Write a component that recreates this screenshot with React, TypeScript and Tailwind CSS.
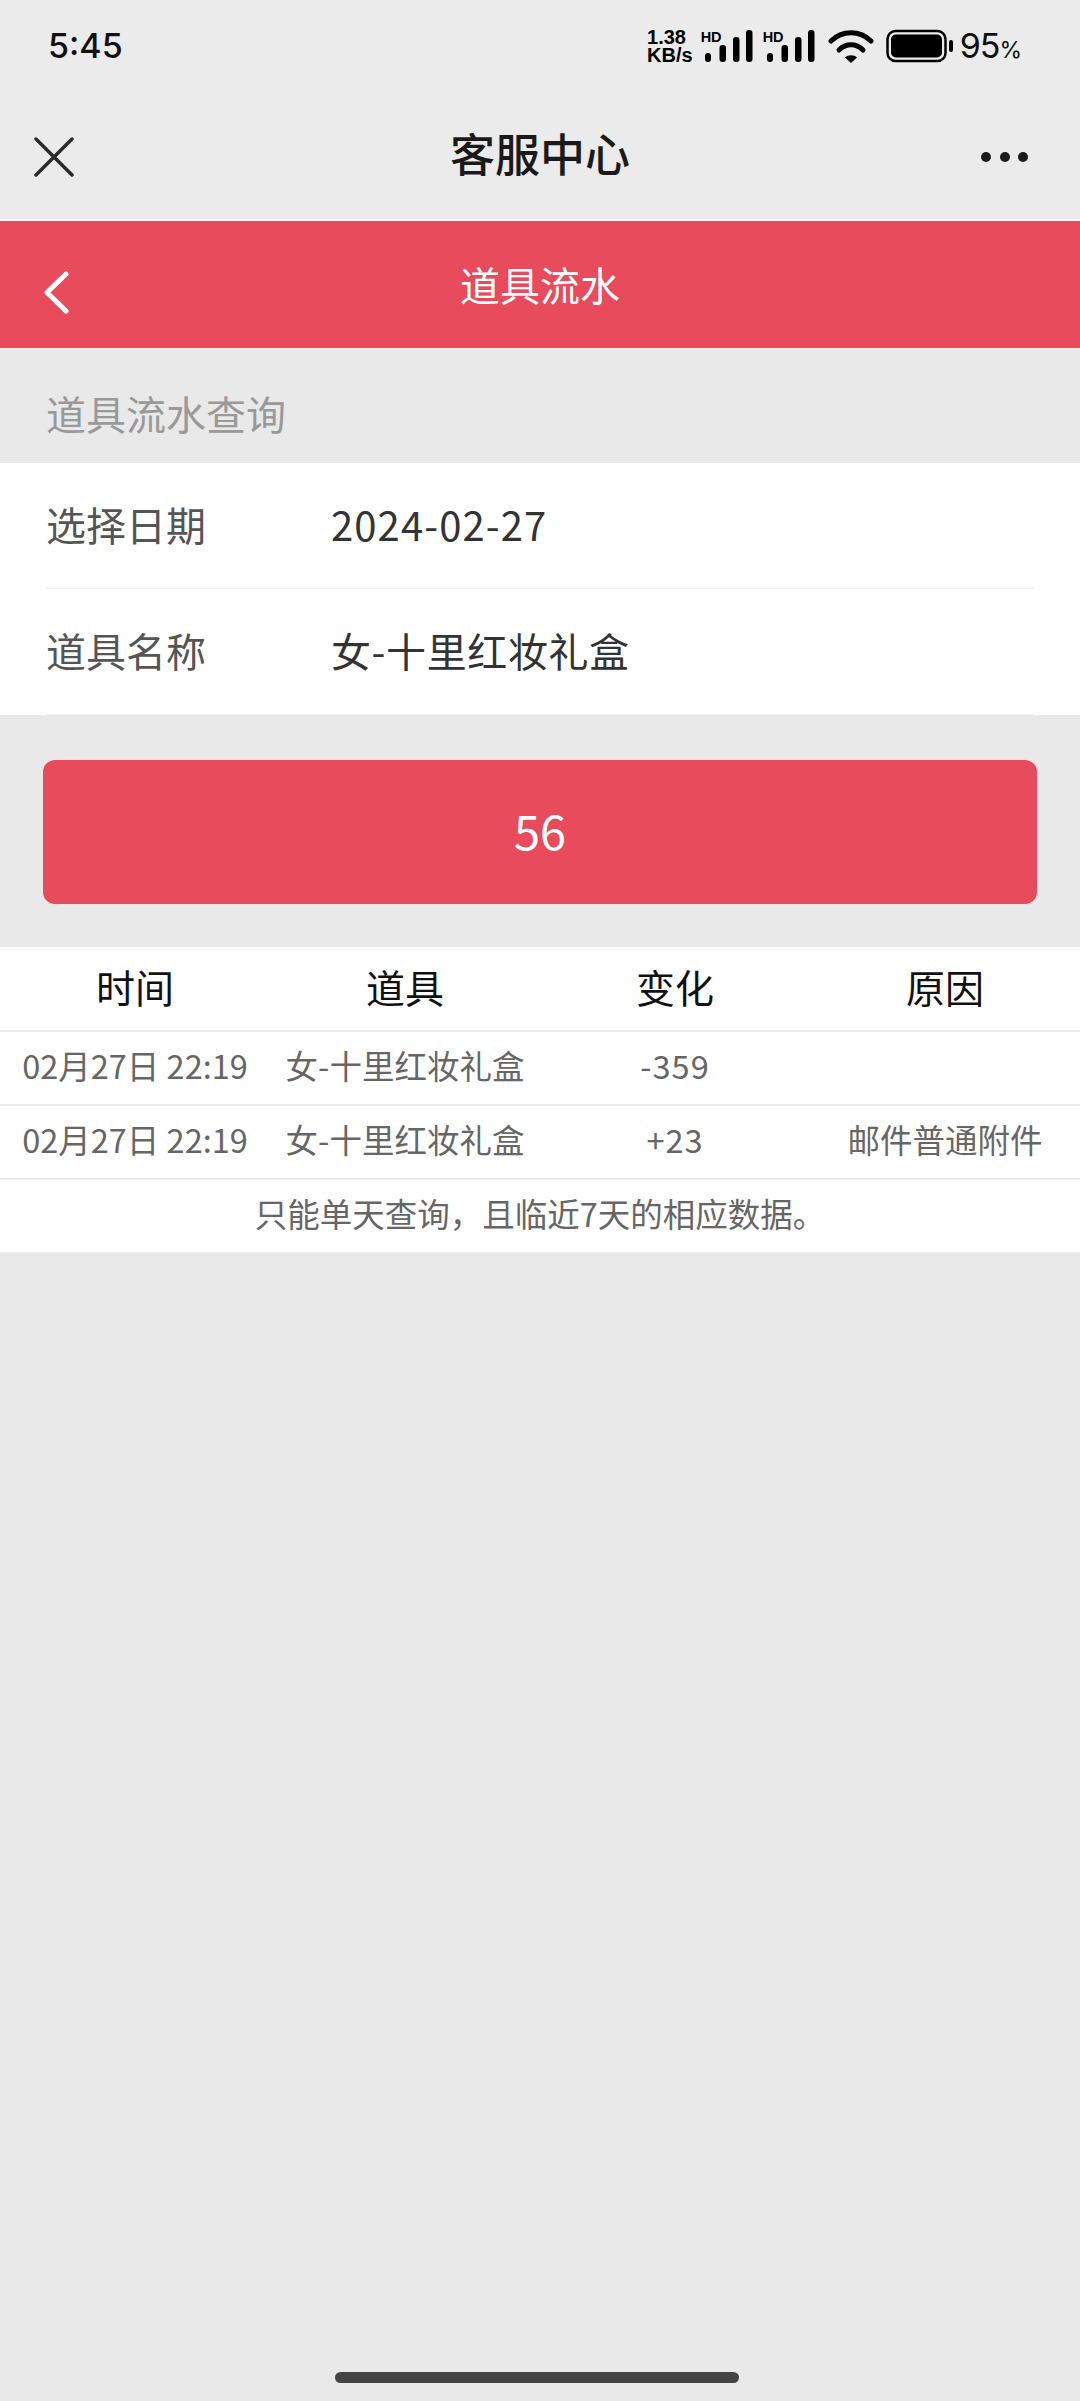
const cjk = "font-['Noto_Sans_CJK_SC','Noto_Sans',sans-serif]";

function Signal() {
  return (
    <div className="relative h-[32px] w-[52px]">
      <span className="absolute left-0 top-[1px] font-['Liberation_Sans',sans-serif] text-[14.5px] font-bold leading-[13px] text-black">HD</span>
      <svg width="52" height="32" viewBox="0 0 52 32" className="absolute left-0 top-0">
        <g fill="#000">
          <rect x="4" y="23" width="6" height="9" rx="3" />
          <rect x="18.5" y="15" width="6.5" height="17" rx="3" />
          <rect x="32" y="7" width="6.5" height="25" rx="3" />
          <rect x="45" y="0" width="6.5" height="32" rx="3" />
        </g>
      </svg>
    </div>
  );
}

function Row({ label, value, tracking }: { label: string; value: string; tracking: string }) {
  return (
    <div className="mx-[46px] flex h-[126px] items-center border-b border-[#efefef] pb-[3px]">
      <span className="w-[285px] text-[40px] leading-none text-[#555555]">{label}</span>
      <span className={`text-[40px] leading-none text-[#333333] ${tracking}`}>{value}</span>
    </div>
  );
}

function TableRow({ cells }: { cells: string[] }) {
  return (
    <div className="grid h-[74px] grid-cols-4 items-center border-t-2 border-[#ececec] pb-[6px] text-center text-[32.5px] leading-none text-[#666666]">
      {cells.map((c, i) => (
        <span key={i} className={`whitespace-nowrap ${i === 2 ? "tracking-[1px]" : ""}`}>{c}</span>
      ))}
    </div>
  );
}

export default function App() {
  return (
    <div className={`flex h-[2401px] w-[1080px] flex-col overflow-hidden bg-[#e9e9e9] ${cjk}`}>
      <div className="bg-[#ebebeb]">
        <div className="flex h-[92px] items-center justify-between pl-[48px] pr-[58px]">
          <span className="font-['Inter',sans-serif] text-[34px] font-medium leading-none text-[#111111]">5:45</span>
          <div className="flex items-center">
            <div className="mr-[8px] font-['Liberation_Sans',sans-serif] text-[20px] font-bold leading-[18px] text-black">
              <div>1.38</div>
              <div>KB/s</div>
            </div>
            <Signal />
            <div className="ml-[10px]"><Signal /></div>
            <svg width="46" height="34" viewBox="0 0 46 34" className="ml-[13px]">
              <path d="M3 12C14 1 32 1 43 12" fill="none" stroke="#000" strokeWidth="5" strokeLinecap="round" />
              <path d="M11 21C18 14 28 14 35 21" fill="none" stroke="#000" strokeWidth="5" strokeLinecap="round" />
              <path d="M17 28.5C20 25.5 26 25.5 29 28.5L23 34Z" fill="#000" />
            </svg>
            <svg width="68" height="34" viewBox="0 0 68 34" className="ml-[12px]">
              <rect x="1.5" y="2" width="58" height="30" rx="8" fill="none" stroke="#000" strokeWidth="2.5" />
              <rect x="5" y="5.5" width="51" height="23" rx="5" fill="#000" />
              <rect x="63" y="11" width="4" height="12" rx="2" fill="#000" />
            </svg>
            <span className="ml-[6px] font-['Inter',sans-serif] text-[34px] leading-none tracking-[-1px] text-[#111111]">95<span className="text-[23px] tracking-normal">%</span></span>
          </div>
        </div>
        <div className="relative flex h-[129px] items-center justify-center border-b-2 border-[#f3f3f3] pb-[6px]">
          <svg width="40" height="40" viewBox="0 0 40 40" className="absolute left-[34px] top-[45px]">
            <path d="M2 2L38 38M38 2L2 38" stroke="#2b2b2b" strokeWidth="3.5" strokeLinecap="round" />
          </svg>
          <span className="text-[45px] font-medium leading-none text-[#1a1a1a]">客服中心</span>
          <div className="absolute left-[981px] top-[60px] flex gap-[8.5px]">
            <span className="size-[10px] rounded-full bg-[#1a1a1a]" />
            <span className="size-[10px] rounded-full bg-[#1a1a1a]" />
            <span className="size-[10px] rounded-full bg-[#1a1a1a]" />
          </div>
        </div>
      </div>

      <div className="relative flex h-[127px] items-center justify-center bg-[#e74b5c] pb-[2px]">
        <svg width="27" height="43" viewBox="0 0 27 43" className="absolute left-[42px] top-[50px]">
          <path d="M24 3L5 21.5L24 40" fill="none" stroke="#fff" strokeWidth="5" strokeLinecap="round" strokeLinejoin="round" />
        </svg>
        <span className="text-[40px] leading-none text-white">道具流水</span>
      </div>

      <div className="flex h-[115px] items-center pl-[46px] pt-[14px] text-[40px] leading-none text-[#999999]">道具流水查询</div>

      <div className="bg-white">
        <Row label="选择日期" value="2024-02-27" tracking="tracking-[1.1px]" />
        <Row label="道具名称" value="女-十里红妆礼盒" tracking="tracking-[0.6px]" />
      </div>

      <div className="mx-[43px] mt-[45px] flex h-[144px] items-center justify-center rounded-[12px] bg-[#e74b5c] pb-[5px] text-[47px] leading-none text-white">56</div>

      <div className="mt-[43px] border-b-2 border-[#ececec] bg-white">
        <div className="grid h-[83px] grid-cols-4 items-center pb-[5px] text-center text-[39px] leading-none text-[#111111]">
          <span>时间</span>
          <span>道具</span>
          <span>变化</span>
          <span>原因</span>
        </div>
        <TableRow cells={["02月27日 22:19", "女-十里红妆礼盒", "-359", ""]} />
        <TableRow cells={["02月27日 22:19", "女-十里红妆礼盒", "+23", "邮件普通附件"]} />
        <div className="flex h-[74px] items-center justify-center border-t-2 border-[#ececec] pb-[5px] text-[32.5px] leading-none text-[#666666]">只能单天查询，且临近7天的相应数据。</div>
      </div>

      <div className="mt-auto mb-[18px] ml-[335px] h-[11px] w-[404px] rounded-full bg-[#444444]" />
    </div>
  );
}
